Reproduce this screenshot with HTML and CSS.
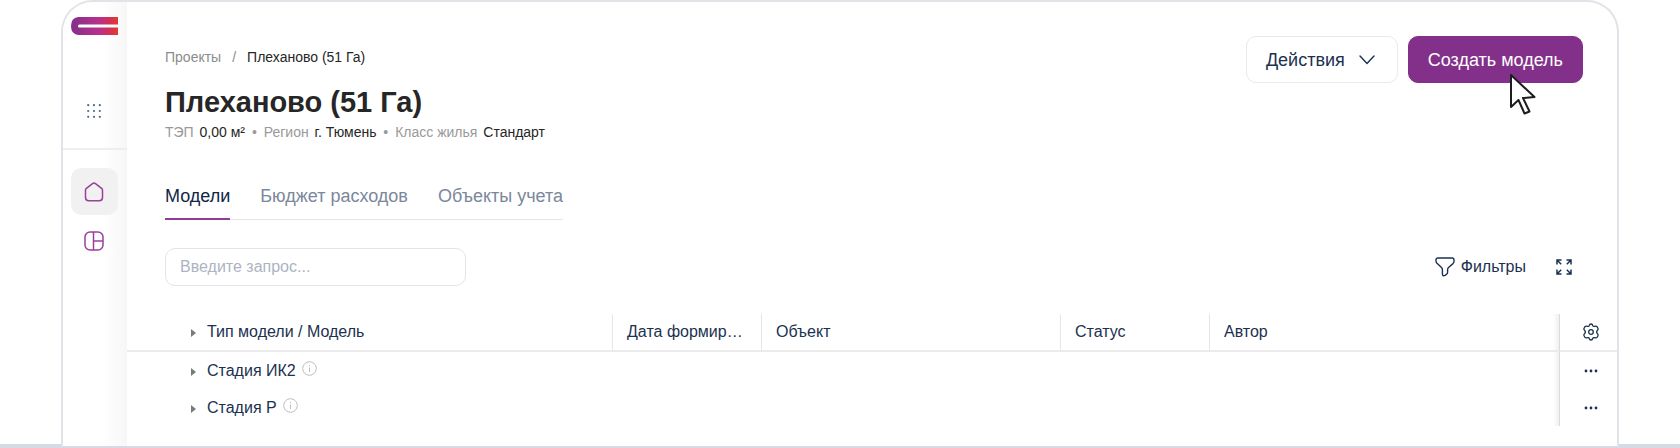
FILE: index.html
```html
<!DOCTYPE html>
<html lang="ru">
<head>
<meta charset="UTF-8">
<meta name="viewport" content="width=device-width, initial-scale=1.0">
<title>Плеханово (51 Га)</title>
<link rel="stylesheet" href="styles.css">
</head>
<body>

<div class="window">
  <aside class="sidebar">
    <div class="sidebar-top">
      <a href="#" class="logo" aria-label="Главная">
        <svg width="47" height="18" viewBox="0 0 47 18">
          <defs>
            <linearGradient id="logoFill" x1="0" x2="1" y1="0" y2="0">
              <stop offset="0" stop-color="#83308a"/>
              <stop offset="0.6" stop-color="#b8308c"/>
              <stop offset="0.8" stop-color="#d0305a"/>
              <stop offset="1" stop-color="#e03c31"/>
            </linearGradient>
          </defs>
          <path fill="url(#logoFill)" d="M7 0H47V7.5H8.5Q7 7.500 7 9Q7 10.500 8.500 10.500H47V18H7Q0 17 0 9Q0 1 7 0Z"/>
        </svg>
      </a>
      <button class="icon-btn" aria-label="Приложения">
        <svg width="14" height="14" viewBox="0 0 14 14" fill="#4a6a8a">
          <circle cx="1.200" cy="1.200" r="1.100"/><circle cx="7" cy="1.200" r="1.100"/><circle cx="12.800" cy="1.200" r="1.100"/>
          <circle cx="1.200" cy="7" r="1.100"/><circle cx="7" cy="7" r="1.100"/><circle cx="12.800" cy="7" r="1.100"/>
          <circle cx="1.200" cy="12.800" r="1.100"/><circle cx="7" cy="12.800" r="1.100"/><circle cx="12.800" cy="12.800" r="1.100"/>
        </svg>
      </button>
    </div>
    <nav class="sidebar-nav">
      <a href="#" class="nav-link active" aria-label="Проекты">
        <svg width="20" height="20" viewBox="0 0 20 20" fill="none" stroke="#9a3f9c" stroke-width="1.5" stroke-linejoin="round">
          <path d="M1.500 8.300Q1.500 7.100 2.400 6.400L8.500 1.600Q10 0.500 11.500 1.600L17.600 6.400Q18.500 7.100 18.500 8.300V15.500Q18.500 18.700 15.300 18.700H4.700Q1.500 18.700 1.500 15.500Z"/>
        </svg>
      </a>
      <a href="#" class="nav-link" aria-label="Панель">
        <svg width="20" height="20" viewBox="0 0 20 20" fill="none" stroke="#9a3f9c" stroke-width="1.5">
          <rect x="1" y="1" width="18" height="18" rx="5"/>
          <path d="M9.500 1V19M9.500 10H19"/>
        </svg>
      </a>
    </nav>
  </aside>

  <main class="content">
    <header class="page-header">
      <div>
        <nav class="breadcrumbs">
          <a href="#">Проекты</a>
          <span>/</span>
          <b>Плеханово (51 Га)</b>
        </nav>
        <h1>Плеханово (51 Га)</h1>
        <p class="meta">ТЭП <b>0,00 м²</b> <span>•</span> Регион <b>г. Тюмень</b> <span>•</span> Класс жилья <b>Стандарт</b></p>
      </div>
      <div class="header-buttons">
        <button class="btn">
          Действия
          <svg width="16" height="10" viewBox="0 0 16 10" fill="none" stroke="#1b3150" stroke-width="1.4" stroke-linecap="round" stroke-linejoin="round"><path d="M1 1L8 8.500L15 1"/></svg>
        </button>
        <div class="create">
          <button class="btn btn-primary">Создать модель</button>
          <svg class="cursor" width="28" height="44" viewBox="0 0 28 44" fill="#fff" stroke="#1d1d1f" stroke-width="2" stroke-linejoin="round">
            <path d="M2 2V34L9.500 27L15.500 40.500L20.500 38.500L14 25L25.500 24Z"/>
          </svg>
        </div>
      </div>
    </header>

    <nav class="tabs">
      <a href="#" class="active">Модели</a>
      <a href="#">Бюджет расходов</a>
      <a href="#">Объекты учета</a>
    </nav>

    <div class="toolbar">
      <input type="text" class="search" placeholder="Введите запрос..." aria-label="Поиск">
      <div class="tools">
        <button class="tool">
          <svg width="20" height="20" viewBox="0 0 20 20" fill="none" stroke="#1b3150" stroke-width="1.400" stroke-linejoin="round">
            <path d="M3 1H17Q19 1 19 3V4.200Q19 5.600 18 6.600L13.500 10.500Q12.600 11.400 12.600 12.700V15.200Q12.600 16.500 11.600 17.200L10 18.400Q7.400 19.500 7.400 16.800V12.700Q7.400 11.500 6.500 10.500L2 6.300Q1 5.200 1 4V3Q1 1 3 1Z"/>
          </svg>
          Фильтры
        </button>
        <button class="tool" aria-label="Развернуть">
          <svg width="16" height="16" viewBox="0 0 16 16" fill="none" stroke="#1b3150" stroke-width="1.500">
            <path d="M1 5.500V1H5.500M1 1L5.200 5.200M10.500 1H15V5.500M15 1L10.800 5.200M1 10.500V15H5.500M1 15L5.200 10.800M10.500 15H15V10.500M15 15L10.800 10.800"/>
          </svg>
        </button>
      </div>
    </div>

    <table class="models">
      <colgroup>
        <col>
        <col class="col-date">
        <col class="col-object">
        <col class="col-status">
        <col class="col-author">
        <col class="col-actions">
      </colgroup>
      <thead>
        <tr>
          <th><button class="toggle" aria-label="Развернуть все"></button>Тип модели / Модель</th>
          <th>Дата формир…</th>
          <th>Объект</th>
          <th>Статус</th>
          <th class="last">Автор</th>
          <th class="actions">
            <button aria-label="Настройки">
              <svg width="16" height="18" viewBox="0 0 16 18" fill="none" stroke="#1b3150" stroke-width="1.300" stroke-linejoin="round">
                <path d="M6.300 2.500Q6.600 1 8 1Q9.400 1 9.700 2.500Q10.200 3.800 11.600 3.300Q13.400 2.700 14.200 3.900L14.900 5.200Q15.500 6.500 14.300 7.500Q13 9 14.300 10.500Q15.500 11.500 14.900 12.800L14.200 14.100Q13.400 15.300 11.600 14.700Q10.200 14.200 9.700 15.500Q9.400 17 8 17Q6.600 17 6.300 15.500Q5.800 14.200 4.400 14.700Q2.600 15.300 1.800 14.100L1.100 12.800Q0.500 11.500 1.700 10.500Q3 9 1.700 7.500Q0.500 6.500 1.100 5.200L1.800 3.900Q2.600 2.700 4.400 3.300Q5.800 3.800 6.300 2.500Z"/>
                <circle cx="8" cy="9" r="2.300"/>
              </svg>
            </button>
          </th>
        </tr>
      </thead>
      <tbody>
        <tr>
          <td><button class="toggle" aria-label="Развернуть"></button>Стадия ИК2
            <svg class="info" width="15" height="15" viewBox="0 0 15 15" fill="none" stroke="#bdbdbd"><circle cx="7.500" cy="7.500" r="6.800"/><path d="M7.500 6.500V11M7.500 4V5.200"/></svg>
          </td>
          <td></td><td></td><td></td><td class="last"></td>
          <td class="actions">
            <button aria-label="Ещё"><svg width="14" height="4" viewBox="0 0 14 4" fill="#1b3150"><circle cx="2" cy="2" r="1.400"/><circle cx="7" cy="2" r="1.400"/><circle cx="12" cy="2" r="1.400"/></svg></button>
          </td>
        </tr>
        <tr>
          <td><button class="toggle" aria-label="Развернуть"></button>Стадия Р
            <svg class="info" width="15" height="15" viewBox="0 0 15 15" fill="none" stroke="#bdbdbd"><circle cx="7.500" cy="7.500" r="6.800"/><path d="M7.500 6.500V11M7.500 4V5.200"/></svg>
          </td>
          <td></td><td></td><td></td><td class="last"></td>
          <td class="actions">
            <button aria-label="Ещё"><svg width="14" height="4" viewBox="0 0 14 4" fill="#1b3150"><circle cx="2" cy="2" r="1.400"/><circle cx="7" cy="2" r="1.400"/><circle cx="12" cy="2" r="1.400"/></svg></button>
          </td>
        </tr>
      </tbody>
    </table>
  </main>
</div>

</body>
</html>
```
FILE: styles.css
```css
* {
  box-sizing: border-box;
}

body {
  margin: 0;
  min-height: 100vh;
  padding: 0 61px;
  display: flex;
  background: linear-gradient(#d8dae3, #d8dae3) left bottom / 100% 4px no-repeat #fff;
  font-family: "Liberation Sans", Arial, sans-serif;
  font-size: 16px;
  color: #1b3150;
}

a {
  color: inherit;
  text-decoration: none;
}

button {
  padding: 0;
  border: none;
  background: none;
  font: inherit;
  color: inherit;
  cursor: pointer;
}

svg {
  display: block;
}

.window {
  flex: 1;
  display: flex;
  border: 2px solid #e0e3e8;
  border-bottom-color: #d8dae3;
  border-radius: 32px 32px 0 0;
  background: #fff;
  overflow: hidden;
}

.sidebar {
  width: 64px;
  background: linear-gradient(to right, #fff 60%, #f7f7f7);
}

.sidebar-top {
  display: flex;
  flex-direction: column;
  align-items: center;
  gap: 69px;
  padding: 15px 2px 30px 0;
  border-bottom: 2px solid #eceef1;
}

.sidebar-nav {
  display: flex;
  flex-direction: column;
  align-items: center;
  gap: 2px;
  padding: 18px 2px 0 0;
}

.nav-link {
  display: flex;
  align-items: center;
  justify-content: center;
  width: 47px;
  height: 47px;
  border-radius: 10px;
}

.nav-link.active {
  background: #f1f1f1;
}

.content {
  flex: 1;
  min-width: 0;
}

.page-header {
  display: flex;
  justify-content: space-between;
  padding: 34px 34px 0 38px;
}

.breadcrumbs {
  display: flex;
  gap: 11px;
  margin-top: 12px;
  font-size: 14px;
  line-height: 18px;
  color: #8c8c8c;
}

.breadcrumbs b,
.meta b {
  font-weight: normal;
  color: #262626;
}

h1 {
  margin: 18px 0 0;
  font-size: 29px;
  line-height: 36px;
  color: #262626;
}

.meta {
  margin: 3px 0 0;
  font-size: 14px;
  line-height: 18px;
  color: #999;
}

.meta b {
  margin-left: 2px;
}

.meta span {
  margin: 0 3px;
}

.header-buttons {
  display: flex;
  align-items: flex-start;
  gap: 10px;
}

.btn {
  display: flex;
  align-items: center;
  gap: 14px;
  height: 47px;
  padding: 1px 22px 0 19px;
  border: 1px solid #e8e9eb;
  border-radius: 10px;
  font-size: 18px;
}

.btn-primary {
  padding: 1px 19px 0;
  border-color: #83308a;
  background: #83308a;
  color: #fff;
}

.create {
  position: relative;
}

/* mouse pointer over the button */
.cursor {
  position: absolute;
  right: 46px;
  top: 37px;
}

.tabs {
  display: inline-flex;
  gap: 30px;
  margin: 44px 0 0 38px;
  border-bottom: 1px solid #e3e5e8;
  font-size: 18px;
  line-height: 22px;
  color: #7b879c;
}

.tabs a {
  padding-bottom: 11px;
}

.tabs .active {
  margin-bottom: -1px;
  border-bottom: 2px solid #913c96;
  color: #0f2747;
}

.toolbar {
  display: flex;
  align-items: center;
  justify-content: space-between;
  padding: 28px 45px 28px 38px;
}

.search {
  width: 301px;
  height: 38px;
  padding: 0 14px;
  border: 1px solid #e3e4e6;
  border-radius: 10px;
  font: inherit;
}

.search::placeholder {
  color: #adb3c2;
}

.tools {
  display: flex;
  align-items: center;
  gap: 30px;
}

.tool {
  display: flex;
  align-items: center;
  gap: 6px;
}

.models {
  width: 100%;
  table-layout: fixed;
  border-collapse: separate;
  border-spacing: 0;
}

.col-date,
.col-status {
  width: 149px;
}

.col-object {
  width: 299px;
}

.col-author {
  width: 350px;
}

.col-actions {
  width: 58px;
}

.models th,
.models td {
  padding: 0 14px;
  text-align: left;
  font-weight: normal;
  white-space: nowrap;
}

.models th {
  height: 38px;
  border-bottom: 2px solid #ebebeb;
  border-left: 1px solid #e6e6e6;
}

.models td {
  height: 37px;
}

.models th:first-child,
.models td:first-child {
  padding-left: 64px;
  border-left: none;
}

.models .last {
  background: linear-gradient(to left, #f0f0f0, #fff) right / 6px 100% no-repeat;
}

.models .actions {
  padding: 0 0 0 4px;
  border-left: 1px solid #dcdcdc;
}

.actions button {
  display: flex;
  align-items: center;
  justify-content: center;
  width: 100%;
  height: 24px;
}

.toggle {
  width: 5px;
  height: 8px;
  margin-right: 11px;
  background: #7a7a7a;
  clip-path: polygon(0 0, 100% 50%, 0 100%);
}

.info {
  display: inline-block;
  margin-left: 2px;
}
```
